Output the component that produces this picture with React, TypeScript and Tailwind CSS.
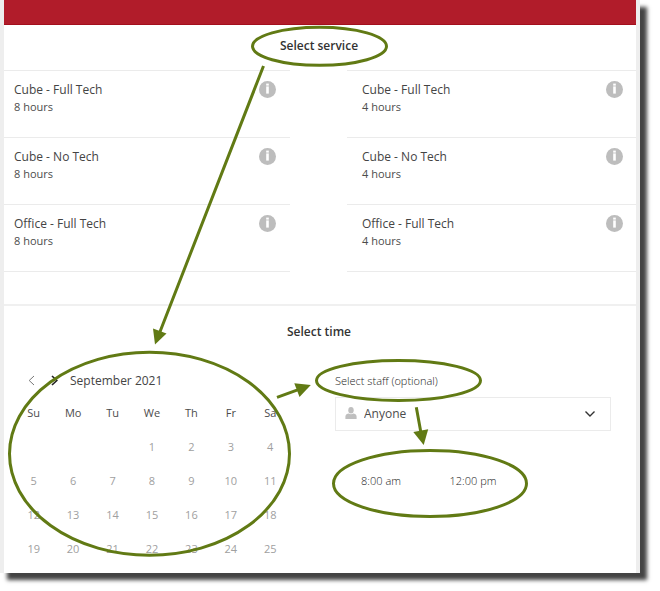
import { useState } from 'react';

type Service = { name: string; duration: string };

const fullDayServices: Service[] = [
  { name: 'Cube - Full Tech', duration: '8 hours' },
  { name: 'Cube - No Tech', duration: '8 hours' },
  { name: 'Office - Full Tech', duration: '8 hours' },
];

const halfDayServices: Service[] = [
  { name: 'Cube - Full Tech', duration: '4 hours' },
  { name: 'Cube - No Tech', duration: '4 hours' },
  { name: 'Office - Full Tech', duration: '4 hours' },
];

const weekdays = ['Su', 'Mo', 'Tu', 'We', 'Th', 'Fr', 'Sa'];

const weeks: (number | null)[][] = [
  [null, null, null, 1, 2, 3, 4],
  [5, 6, 7, 8, 9, 10, 11],
  [12, 13, 14, 15, 16, 17, 18],
  [19, 20, 21, 22, 23, 24, 25],
];

const times = ['8:00 am', '12:00 pm'];

function InfoIcon() {
  return (
    <svg className="size-[17px]" viewBox="0 0 17 17" aria-hidden="true">
      <circle cx="8.5" cy="8.5" r="8.5" fill="#bdbdbd" />
      <rect x="7.2" y="2.6" width="2.6" height="2" fill="#fff" />
      <rect x="7.2" y="5.4" width="2.6" height="7.2" fill="#fff" />
    </svg>
  );
}

function ServiceRow({ service, inset }: { service: Service; inset: string }) {
  return (
    <li className={`flex h-[67px] items-start justify-between border-b border-[#ebebeb] pt-2.5 ${inset}`}>
      <div>
        <p className="text-[12px] leading-[18px] text-[#444]">{service.name}</p>
        <p className="text-[11px] leading-4 text-[#4c4c4c]">{service.duration}</p>
      </div>
      <button type="button" aria-label={`About ${service.name}, ${service.duration}`}>
        <InfoIcon />
      </button>
    </li>
  );
}

function Calendar() {
  return (
    <div>
      <div className="flex h-[31px] items-center">
        <button type="button" aria-label="Previous month" className="ml-3.5">
          <svg className="h-[11px] w-[7px]" viewBox="0 0 7 11" fill="none" stroke="#777">
            <path d="M6 1 1.2 5.5 6 10" />
          </svg>
        </button>
        <button type="button" aria-label="Next month" className="ml-4">
          <svg className="h-[11px] w-[7px]" viewBox="0 0 7 11" fill="none" stroke="#222" strokeWidth="1.6">
            <path d="M1 1 5.8 5.5 1 10" />
          </svg>
        </button>
        <p className="ml-3 text-[12px] text-[#444]">September 2021</p>
      </div>
      <table className="w-full table-fixed text-center text-[11px]">
        <thead>
          <tr className="h-[34px]">
            {weekdays.map((day) => (
              <th key={day} className="p-0 font-normal text-[#4c4c4c]">
                {day}
              </th>
            ))}
          </tr>
        </thead>
        <tbody>
          {weeks.map((week, i) => (
            <tr key={i} className="h-[34px]">
              {week.map((day, j) => (
                <td key={j} className="p-0 text-[#a0a0a0]">
                  {day}
                </td>
              ))}
            </tr>
          ))}
        </tbody>
      </table>
    </div>
  );
}

function StaffAndTimes() {
  const [staff, setStaff] = useState('Anyone');

  return (
    <div>
      <label htmlFor="staff" className="flex h-8 items-center text-[11px] font-light text-[#222]">
        Select staff (optional)
      </label>
      <div className="relative">
        <select
          id="staff"
          value={staff}
          onChange={(e) => setStaff(e.target.value)}
          className="h-[34px] w-full appearance-none border border-[#ebebeb] bg-white pl-7 text-[12px] text-[#4c4c4c]"
        >
          <option>Anyone</option>
        </select>
        <svg className="pointer-events-none absolute top-2.5 left-2.5 size-3" viewBox="0 0 12 12" fill="#bfbfbf">
          <ellipse cx="6" cy="3.2" rx="2.7" ry="3.2" />
          <path d="M.4 12V9.4C.4 7.6 2.2 6.8 3.8 6.6 5 7.6 7 7.6 8.2 6.6 9.8 6.8 11.6 7.6 11.6 9.4V12z" />
        </svg>
        <svg
          className="pointer-events-none absolute top-3.5 right-4 h-[6px] w-[10px]"
          viewBox="0 0 10 6"
          fill="none"
          stroke="#333"
          strokeWidth="1.4"
        >
          <path d="M.5.5 5 5 9.5.5" />
        </svg>
      </div>
      <div className="mt-[33px] grid grid-cols-3">
        {times.map((time) => (
          <button key={time} type="button" className="h-[34px] text-[11px] font-light text-[#222]">
            {time}
          </button>
        ))}
      </div>
    </div>
  );
}

// Walkthrough marks drawn over the form
function Annotations() {
  return (
    <svg className="pointer-events-none absolute inset-0 size-full" viewBox="4 0 632 573" aria-hidden="true">
      <g fill="none" stroke="#617a14" strokeWidth="3">
        <ellipse cx="319.5" cy="46.3" rx="67" ry="19" />
        <ellipse cx="149.5" cy="453.8" rx="140" ry="101.5" />
        <ellipse cx="398.5" cy="380.5" rx="82" ry="20" />
        <ellipse cx="430" cy="483.5" rx="96.5" ry="33" />
        <path d="M263.5 66 159.5 333M277 397.3 299 389.3M416.3 407.3 421 433" />
      </g>
      <g fill="#617a14">
        <path d="M155 344.5 153 328.5 166.5 333.5z" />
        <path d="M310.8 385 294.3 383.3 299.5 397z" />
        <path d="M423.7 445 413.3 432 428.2 429.3z" />
      </g>
    </svg>
  );
}

function App() {
  return (
    <div className="bg-white pr-5 pb-[18px] font-['Open_Sans','Noto_Sans',sans-serif]">
      <main className="relative border-x-4 border-[#eeeeee] bg-white shadow-[7px_7px_4px_#444444]">
        <header className="h-[25px] border-b border-[#a30f1d] bg-[#b11c2a]" />

        <section className="border-b-2 border-[#f0f0f0] pb-8">
          <h2 className="flex h-[45px] items-center justify-center pr-0.5 pb-1 text-[12px] font-semibold text-[#333]">
            Select service
          </h2>
          <div className="grid grid-cols-[286fr_289fr] gap-[57px]">
            <ul className="border-t border-[#ebebeb]">
              {fullDayServices.map((service) => (
                <ServiceRow key={service.name} service={service} inset="pl-2.5 pr-3.5" />
              ))}
            </ul>
            <ul className="border-t border-[#ebebeb]">
              {halfDayServices.map((service) => (
                <ServiceRow key={service.name} service={service} inset="pl-[15px] pr-[13px]" />
              ))}
            </ul>
          </div>
        </section>

        <section className="pb-[7px]">
          <h2 className="flex h-[59px] items-center justify-center pr-0.5 pb-2 text-[12px] font-semibold text-[#333]">
            Select time
          </h2>
          <div className="grid grid-cols-2 gap-[45px] pr-[25px] pl-2.5">
            <Calendar />
            <StaffAndTimes />
          </div>
        </section>

        <Annotations />
      </main>
    </div>
  );
}

export default App;
